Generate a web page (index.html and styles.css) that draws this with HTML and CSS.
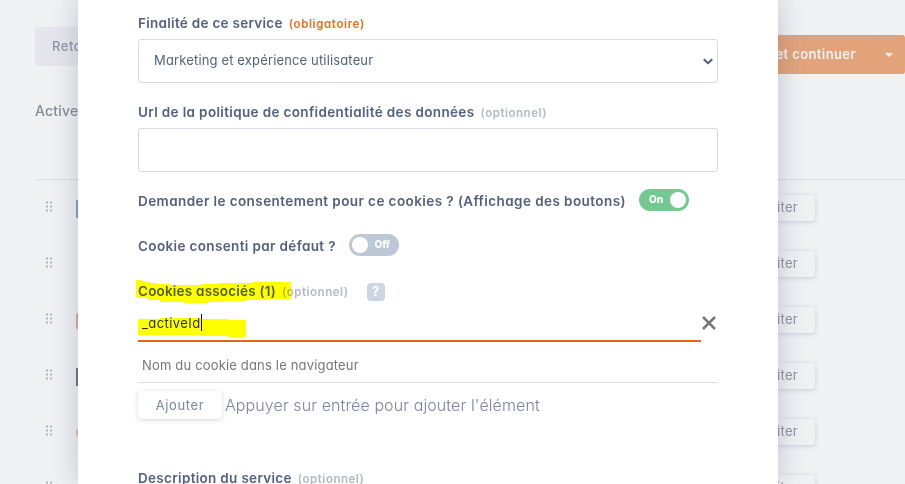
FILE: index.html
```html
<!DOCTYPE html>
<html lang="fr">
<head>
<meta charset="utf-8">
<title>Service</title>
<link rel="stylesheet" href="styles.css">
</head>
<body>
<div class="page">
  <div class="topbar">
    <div class="back">Retour</div>
    <div class="save"><span class="save-label">Enregistrer et continuer</span><span class="save-more"><i class="caret"></i></span></div>
  </div>
  <div class="heading">Active</div>
  <div class="rows">
    <div class="row"><svg class="grip" viewBox="0 0 7 11"><path d="M0 1.5h2M4 1.5h2M0 5.5h2M4 5.5h2M0 9.5h2M4 9.5h2"/></svg><i class="logo blue"></i><span class="edit">Éditer</span></div>
    <div class="row"><svg class="grip" viewBox="0 0 7 11"><path d="M0 1.5h2M4 1.5h2M0 5.5h2M4 5.5h2M0 9.5h2M4 9.5h2"/></svg><i class="logo"></i><span class="edit">Éditer</span></div>
    <div class="row"><svg class="grip" viewBox="0 0 7 11"><path d="M0 1.5h2M4 1.5h2M0 5.5h2M4 5.5h2M0 9.5h2M4 9.5h2"/></svg><i class="logo red"></i><span class="edit">Éditer</span></div>
    <div class="row"><svg class="grip" viewBox="0 0 7 11"><path d="M0 1.5h2M4 1.5h2M0 5.5h2M4 5.5h2M0 9.5h2M4 9.5h2"/></svg><i class="logo dark"></i><span class="edit">Éditer</span></div>
    <div class="row"><svg class="grip" viewBox="0 0 7 11"><path d="M0 1.5h2M4 1.5h2M0 5.5h2M4 5.5h2M0 9.5h2M4 9.5h2"/></svg><i class="logo sand"></i><span class="edit">Éditer</span></div>
    <div class="row"><svg class="grip" viewBox="0 0 7 11"><path d="M0 1.5h2M4 1.5h2M0 5.5h2M4 5.5h2M0 9.5h2M4 9.5h2"/></svg><i class="logo"></i><span class="edit">Éditer</span></div>
  </div>
</div>

<div class="modal">
  <div class="label"><span class="t1">Finalité de ce service</span><span class="note required">(obligatoire)</span></div>
  <div class="field select"><span class="t-select">Marketing et expérience utilisateur</span><svg class="chevron" viewBox="0 0 10 7"><path d="M.8 1.2 5 5.2 9.2 1.2"/></svg></div>
  <div class="label second"><span class="t2">Url de la politique de confidentialité des données</span><span class="note">(optionnel)</span></div>
  <div class="field"></div>
  <div class="label consent"><span class="t3">Demander le consentement pour ce cookies ? (Affichage des boutons)</span><span class="toggle on"><b>On</b><i></i></span></div>
  <div class="label default"><span class="t4">Cookie consenti par défaut ?</span><span class="toggle"><i></i><b>Off</b></span></div>
  <div class="label cookies"><span class="t5">Cookies associés (1)</span><span class="note">(optionnel)</span><span class="help">?</span></div>
  <div class="entry">
    <div class="input active"><span class="t-id">_activeId</span><i class="cursor"></i></div>
    <svg class="remove" viewBox="0 0 16 16"><path d="M2 2 14 14M14 2 2 14"/></svg>
  </div>
  <div class="input empty"><span class="t-ph">Nom du cookie dans le navigateur</span></div>
  <div class="add"><span class="add-button">Ajouter</span><span class="hint">Appuyer sur entrée pour ajouter l'élément</span></div>
  <div class="label description"><span class="t6">Description du service</span><span class="note">(optionnel)</span></div>
  <svg class="marker" viewBox="0 0 114 62">
    <path d="M0 1H6V2H8V3H14V4H20V5H34V6H66V5H82V4H116V3H155V20H130V21H110V22H88V23H72V24H48V23H24V21H12V19H1V18H0Z"/>
    <path d="M2 40H23V39H66V40H92V41H110V58H92V57H66V56H2Z"/>
  </svg>
</div>
</body>
</html>
```
FILE: styles.css
```css
* { box-sizing: border-box; }
body {
  margin: 0;
  width: 905px;
  height: 484px;
  overflow: hidden;
  position: relative;
  background: #eff1f3;
  font-family: Inter, "Open Sans", sans-serif;
  font-feature-settings: "cv11", "ss03";
  font-size: 13px;
  color: #54607f;
}
i { font-style: normal; }
.page { height: 484px; overflow: hidden; padding: 27px 0 0 35px; }
.topbar { display: flex; justify-content: space-between; align-items: flex-start; height: 47px; }
.back {
  width: 110px; height: 39px; padding-left: 17px; border-radius: 3px;
  background: #e4e6eb; color: #8e98a8; font-weight: 500; line-height: 39px; letter-spacing: .5px;
}
.save {
  display: flex; margin-top: 8px; height: 39px; border-radius: 3px;
  background: #e2a37a; color: #f4f3f2; font-weight: 600; line-height: 39px;
}
.save-label { padding: 0 16px; border-right: 1px solid #d9a17e; letter-spacing: .4px; }
.save-more { width: 32px; display: flex; align-items: center; justify-content: center; }
.caret { border: 4px solid transparent; border-top-color: #f4f3f2; border-bottom: 0; }
.heading { height: 105px; padding-top: 27px; line-height: 20px; font-size: 14px; font-weight: 500; letter-spacing: .2px; color: #858d94; }
.rows { border-top: 1px solid #dcdfe3; }
.row { height: 56px; display: flex; align-items: center; padding-right: 90px; }
.grip { width: 7px; height: 11px; margin: -3px 23px 0 11px; stroke: #b0b5c2; stroke-width: 2; }
.logo { width: 18px; height: 18px; margin-top: 2px; }
.blue { background: #859bdc; }
.red { background: #e8a294; border-radius: 4px; }
.dark { background: #6f767c; }
.sand { background: #dfc19b; border-radius: 9px; }
.edit {
  margin-left: auto; height: 26px; padding: 0 17px; border-radius: 4px; line-height: 24px;
  color: #8e949f; letter-spacing: .3px; box-shadow: 0 1px 5px rgba(60, 70, 90, .2);
}
.modal {
  position: absolute; top: 0; left: 78px; width: 700px; height: 484px; padding: 11px 60px 0;
  overflow: clip; overflow-clip-margin: 40px;
  background: #fff; box-shadow: 0 0 25px rgba(80, 95, 125, .3);
}
.label { display: flex; align-items: center; height: 24px; font-size: 13.5px; font-weight: 600; white-space: nowrap; }
.t1 { letter-spacing: .28px; }
.t2 { letter-spacing: .35px; }
.t3 { letter-spacing: .42px; }
.t4 { letter-spacing: .36px; }
.t5 { letter-spacing: .2px; }
.t6 { letter-spacing: .31px; }
.note { margin: 2px 0 0 6px; font-size: 11.5px; letter-spacing: .52px; color: #b1b9c3; }
.required { letter-spacing: .62px; color: #ed6f1b; }
.field { height: 44px; margin-top: 4px; border: 1px solid #d7dae1; border-radius: 3px; }
.select { display: flex; align-items: center; justify-content: space-between; padding: 0 4px 2px 15px; }
.t-select { letter-spacing: .15px; }
.chevron { width: 10px; height: 7px; margin-top: 2px; fill: none; stroke: #505a7a; stroke-width: 2; }
.second { margin-top: 17px; }
.consent { margin-top: 17px; }
.default { margin-top: 21px; }
.cookies { margin-top: 21px; }
.toggle {
  display: flex; align-items: center; justify-content: space-between; width: 50px; height: 22px;
  margin: -2px 0 0 13px; padding: 0 9px 0 3px; border-radius: 11px; background: #bdc8d7; color: #fff;
}
.toggle i { width: 16px; height: 16px; border-radius: 50%; background: #fff; }
.toggle b { font-size: 10px; font-weight: 800; line-height: 21px; height: 22px; }
.on { background: #74c891; padding: 0 3px 0 10px; }
.help {
  width: 18px; height: 18px; margin: 2px 0 0 18px; border-radius: 4px; background: #ccd5e1;
  color: #fff; text-align: center; font-size: 13px; font-weight: 700; line-height: 17px;
}
.entry { display: flex; height: 39px; }
.input { display: flex; align-items: center; padding-left: 4px; }
.active { width: 563px; padding-top: 2px; color: #2c2f38; border-bottom: 2px solid #e8650f; }
.t-id { letter-spacing: .42px; }
.cursor { position: relative; z-index: 2; width: 1px; height: 17px; background: #000; }
.remove { width: 16px; height: 16px; margin-top: 12px; fill: none; stroke: #777; stroke-width: 2.5; }
.empty { height: 41px; padding-top: 6px; border-bottom: 1px solid #dcdfe7; color: #777; }
.t-ph { letter-spacing: .17px; }
.add { display: flex; align-items: center; height: 28px; margin-top: 8px; }
.add-button {
  width: 84px; height: 28px; border-radius: 4px; text-align: center; line-height: 28px;
  letter-spacing: .6px; color: #7c8797; box-shadow: 0 1px 5px rgba(60, 70, 90, .22);
}
.hint { margin-left: 3px; font-size: 16px; letter-spacing: .1px; color: #7c84a3; font-weight: 300; white-space: nowrap; }
.description { margin-top: 47px; }
.marker { position: absolute; left: 58px; top: 279px; width: 114px; height: 62px; overflow: visible; fill: #ff0; mix-blend-mode: multiply; }
```
